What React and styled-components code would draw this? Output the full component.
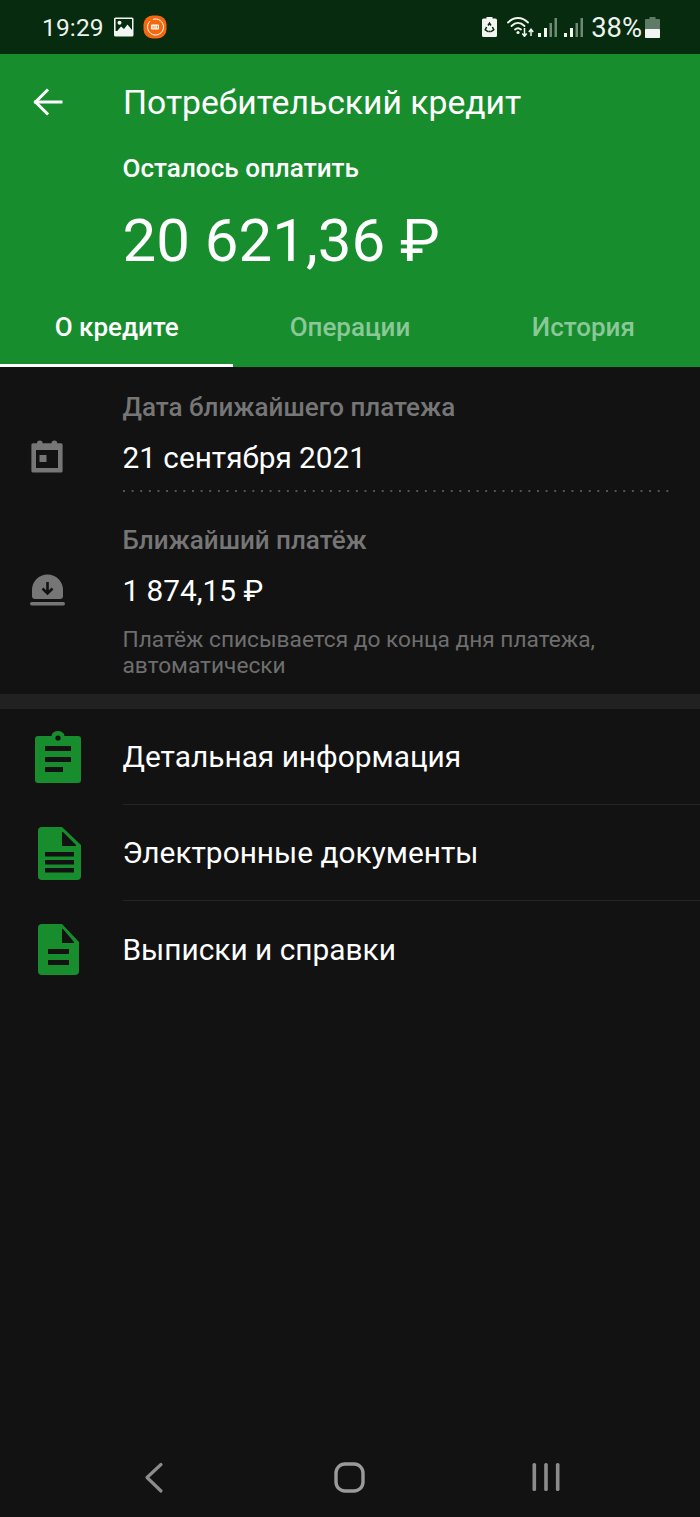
import React from "react";
import styled, { createGlobalStyle } from "styled-components";

const Global = createGlobalStyle`
  html, body { margin: 0; padding: 0; background: #121212; }
  body { font-family: Roboto, "Noto Sans", sans-serif; -webkit-font-smoothing: antialiased; }
  * { box-sizing: border-box; }
`;

const Page = styled.div`
  width: 700px;
  height: 1517px;
  background: #121212;
  color: #fff;
  display: flex;
  flex-direction: column;
  overflow: hidden;
`;

const StatusBar = styled.div`
  height: 54px;
  flex: none;
  background: #062b0e;
  display: flex;
  align-items: center;
  padding: 0 40px 0 42px;
  color: #eef2ee;
`;
const StatusTime = styled.span`
  font-size: 24.5px;
  margin-right: 9px;
  letter-spacing: 0.15px;
`;
const StatusRight = styled.div`
  margin-left: auto;
  display: flex;
  align-items: center;
`;
const StatusPercent = styled.span`
  font-size: 27.4px;
  margin: 2px 3px 0 8px;
`;

const Header = styled.header`
  background: #178d2e;
  height: 313px;
  flex: none;
  display: flex;
  flex-direction: column;
`;
const AppBar = styled.div`
  display: flex;
  align-items: center;
  height: 78px;
  padding: 20px 0 0 32px;
  gap: 59px;
`;
const BackWrap = styled.div`
  display: flex;
  padding-bottom: 3px;
`;
const Title = styled.h1`
  margin: 0;
  font-size: 33.7px;
  font-weight: 400;
  line-height: 40px;
`;
const Summary = styled.div`
  padding: 0 0 0 122.5px;
  display: flex;
  flex-direction: column;
`;
const SummaryLabel = styled.div`
  margin-top: 21px;
  font-size: 26.1px;
  font-weight: 500;
  line-height: 30px;
`;
const Amount = styled.div`
  margin-top: 23px;
  font-size: 60px;
  font-weight: 400;
  line-height: 70px;
`;
const Tabs = styled.nav`
  margin-top: auto;
  display: grid;
  grid-template-columns: repeat(3, 1fr);
  height: 56px;
`;
const Tab = styled.div`
  display: flex;
  align-items: center;
  justify-content: center;
  padding-bottom: 21px;
  font-size: 26px;
  font-weight: 500;
  color: ${(p) => (p.$active ? "#fff" : "#8bc897")};
  border-bottom: 3px solid ${(p) => (p.$active ? "#fff" : "transparent")};
`;

const InfoSection = styled.section`
  height: 327px;
  flex: none;
  display: flex;
  flex-direction: column;
`;
const InfoRow = styled.div`
  display: grid;
  grid-template-columns: 122.5px 1fr;
  height: ${(p) => p.$height}px;
`;
const InfoIconCell = styled.div`
  display: flex;
  justify-content: center;
  padding: ${(p) => p.$top}px 28px 0 0;
`;
const InfoBody = styled.div`
  display: flex;
  flex-direction: column;
  padding-top: ${(p) => p.$top}px;
  padding-right: 30px;
`;
const InfoLabel = styled.div`
  font-size: 26px;
  font-weight: 500;
  line-height: 30px;
  color: #767676;
`;
const InfoValue = styled.div`
  margin-top: 21px;
  font-size: 29.75px;
  line-height: 30px;
  color: #fff;
`;
const Dots = styled.div`
  margin: 17px -2px 0 0;
  height: 2px;
  background-image: linear-gradient(to right, #555 0 2px, transparent 2px);
  background-size: 8.64px 2px;
  background-repeat: repeat-x;
`;
const InfoNote = styled.div`
  margin-top: 21px;
  font-size: 22.7px;
  line-height: 26px;
  color: #6e6e6e;
`;

const Band = styled.div`
  height: 15px;
  flex: none;
  background: #212121;
`;

const Menu = styled.div`
  display: flex;
  flex-direction: column;
`;
const MenuItem = styled.div`
  display: grid;
  grid-template-columns: 122.5px 1fr;
  height: 96px;
`;
const MenuIcon = styled.div`
  display: flex;
  align-items: center;
  justify-content: center;
  padding-right: ${(p) => p.$shift}px;
`;
const MenuText = styled.div`
  display: flex;
  align-items: center;
  font-size: 29.85px;
  padding-top: ${(p) => (p.$last ? 1 : 0)}px;
  border-bottom: ${(p) => (p.$last ? "none" : "1px solid #242424")};
`;

const NavBar = styled.div`
  margin-top: auto;
  height: 80px;
  flex: none;
  display: grid;
  grid-template-columns: repeat(3, 196px);
  align-items: start;
  padding: 0 56px;
`;
const NavCell = styled.div`
  display: flex;
  justify-content: center;
  padding-top: 25px;
`;

const ImageGlyph = () => (
  <svg width="22" height="22" viewBox="0 0 22 22" style={{ marginRight: 8 }}>
    <rect x="1" y="1.5" width="19.5" height="19" rx="1.5" fill="#f2f5f2" />
    <rect x="2.6" y="3" width="16.4" height="12" fill="#062b0e" />
    <circle cx="6.5" cy="6.8" r="2" fill="#f2f5f2" />
    <path d="M2.5 17 L8 10.5 L11 13 L14.5 8.5 L19 14 V18 H2.5Z" fill="#f2f5f2" />
  </svg>
);
const MiGlyph = () => (
  <svg width="24" height="24" viewBox="0 0 24 24">
    <rect x="0.5" y="0.5" width="23" height="23" rx="9" fill="#f4690f" />
    <path d="M7 6.2 A8 8 0 1 0 10 4.4" fill="none" stroke="#fff" strokeWidth="1" />
    <rect x="8" y="9.5" width="8" height="5" rx="1" fill="#fff" />
    <path d="M10 10.8V13.5M12 10.8V13.5M14.4 10.5V13.5" stroke="#f4690f" strokeWidth="0.8" />
  </svg>
);
const RecycleBattery = () => (
  <svg width="15" height="20" viewBox="0 0 15 20" style={{ marginRight: 10 }}>
    <path d="M4.5 0H10.5V1.5H13.5a1.5 1.5 0 0 1 1.5 1.5V18.5a1.5 1.5 0 0 1-1.5 1.5H1.5A1.5 1.5 0 0 1 0 18.5V3a1.5 1.5 0 0 1 1.5-1.5H4.5Z" fill="#f2f5f2" />
    <path d="M6 8.5 L7.5 6.2 L9 8.5 M10.4 10 L11.8 12.8 L9 14.6 M4.6 10 L3.2 12.8 L6 14.6 M6.4 14.6H8.6" stroke="#062b0e" strokeWidth="1.5" fill="none" />
  </svg>
);
const Wifi = () => (
  <svg width="27" height="20" viewBox="0 0 27 20" style={{ marginRight: 4 }}>
    <g fill="none" stroke="#f2f5f2" strokeWidth="1.8" strokeLinecap="round">
      <path d="M1 5.5 C7 -0.5 15 -0.5 21 5.5" />
      <path d="M4.5 9 C8.5 5 13.5 5 17.5 9" />
      <path d="M8 12.5 C10 10.8 12 10.8 14 12.5" />
    </g>
    <circle cx="11" cy="15.5" r="1.6" fill="#f2f5f2" />
    <path d="M17.5 11V19M15.3 16.5L17.5 19.3L19.7 16.5M24 19V12.5M21.8 15L24 12.2L26.2 15" stroke="#f2f5f2" strokeWidth="1.5" fill="none" />
  </svg>
);
const Signal = ({ style }) => (
  <svg width="19" height="19" viewBox="0 0 19 19" style={{ marginTop: 1, ...style }}>
    <rect x="0" y="15" width="3" height="4" fill="#f2f5f2" />
    <rect x="6" y="10" width="3" height="9" fill="#f2f5f2" />
    <rect x="11.5" y="5" width="2.5" height="14" fill="#6e8a74" />
    <rect x="16.5" y="0" width="2.5" height="19" fill="#6e8a74" />
  </svg>
);
const Battery = () => (
  <svg width="15" height="21" viewBox="0 0 15 21">
    <path d="M4.5 0H10.5V2H14a1 1 0 0 1 1 1V21H0V3a1 1 0 0 1 1-1H4.5Z" fill="#5f7a66" />
    <rect x="0" y="12" width="15" height="9" rx="1" fill="#f2f5f2" />
  </svg>
);

const BackArrow = () => (
  <svg width="32" height="32" viewBox="0 0 32 32" fill="none" stroke="#fff" strokeWidth="3" strokeLinecap="square">
    <path d="M3.5 16 H29" />
    <path d="M15 4.5 L3.5 16 L15 27.5" />
  </svg>
);
const CalendarIcon = () => (
  <svg width="32" height="33" viewBox="0 0 32 33">
    <path fill="#767676" d="M6 3.2a2.8 2.8 0 0 1 5.6 0h9a2.8 2.8 0 0 1 5.6 0H30a1.6 1.6 0 0 1 1.6 1.6V31a1.6 1.6 0 0 1-1.6 1.6H2A1.6 1.6 0 0 1 .4 31V4.8A1.6 1.6 0 0 1 2 3.2Z" />
    <rect x="5" y="10" width="22" height="18" fill="#121212" />
    <rect x="8.5" y="15" width="7" height="7" fill="#767676" />
  </svg>
);
const DownloadIcon = () => (
  <svg width="35" height="33" viewBox="0 0 35 33">
    <path fill="#767676" d="M2 23 V17 a15.5 15.5 0 0 1 31 0 V23 Q33 26 30 26 H5 Q2 26 2 23Z" />
    <path d="M17.5 9V20M12.5 15.5L17.5 20.5L22.5 15.5" stroke="#121212" strokeWidth="2.6" fill="none" />
    <rect x="0" y="29" width="35" height="3.4" rx="1.7" fill="#767676" />
  </svg>
);
const ClipboardIcon = () => (
  <svg width="46" height="52" viewBox="0 0 46 52">
    <path fill="#178d2e" d="M16.5 5 a6.5 5 0 0 1 13 0 H43 a3 3 0 0 1 3 3 V49 a3 3 0 0 1-3 3 H3 a3 3 0 0 1-3-3 V8 a3 3 0 0 1 3-3Z" />
    <circle cx="23" cy="7" r="2.6" fill="#121212" />
    <rect x="10" y="15" width="26" height="5" fill="#121212" />
    <rect x="10" y="26" width="26" height="5" fill="#121212" />
    <rect x="10" y="36" width="18" height="5" fill="#121212" />
  </svg>
);
const DocIcon = ({ lines, w, h }) => (
  <svg width={w} height={h} viewBox={`0 0 ${w} ${h}`}>
    <path fill="#178d2e" d={`M4 0 H24 L${w} 18 V${h - 4} a4 4 0 0 1-4 4 H4 a4 4 0 0 1-4-4 V4 a4 4 0 0 1 4-4Z`} />
    <path fill="#121212" d={`M24 5 V19 H${w - 5} V18 L25 5Z`} />
    {lines.map((y) => (
      <rect key={y} x={lines.length === 3 ? 7 : 10} y={y} width={lines.length === 3 ? 29 : 21} height={lines.length === 3 ? 4.5 : 5} fill="#121212" />
    ))}
  </svg>
);
const NavBack = () => (
  <svg width="20" height="32" viewBox="0 0 20 32" fill="none" stroke="#8c8c8c" strokeWidth="3.2" strokeLinecap="round" strokeLinejoin="round">
    <path d="M17 2.5 L3 15.5 L17 29" />
  </svg>
);
const NavHome = () => (
  <svg width="32" height="32" viewBox="0 0 32 32" fill="none" stroke="#9a9a9a" strokeWidth="3.4">
    <rect x="2" y="2" width="27" height="27" rx="9" />
  </svg>
);
const NavRecents = () => (
  <svg width="30" height="30" viewBox="0 0 30 30" fill="#8c8c8c">
    <rect x="1.5" y="1" width="3.6" height="28" rx="1.6" />
    <rect x="13.2" y="1" width="3.6" height="28" rx="1.6" />
    <rect x="24.9" y="1" width="3.6" height="28" rx="1.6" />
  </svg>
);

export default function App() {
  return (
    <Page>
      <Global />
      <StatusBar>
        <StatusTime>19:29</StatusTime>
        <ImageGlyph />
        <MiGlyph />
        <StatusRight>
          <RecycleBattery />
          <Wifi />
          <Signal style={{ marginRight: 7 }} />
          <Signal />
          <StatusPercent>38%</StatusPercent>
          <Battery />
        </StatusRight>
      </StatusBar>
      <Header>
        <AppBar>
          <BackWrap><BackArrow /></BackWrap>
          <Title>Потребительский кредит</Title>
        </AppBar>
        <Summary>
          <SummaryLabel>Осталось оплатить</SummaryLabel>
          <Amount>20 621,36 ₽</Amount>
        </Summary>
        <Tabs>
          <Tab $active>О кредите</Tab>
          <Tab>Операции</Tab>
          <Tab>История</Tab>
        </Tabs>
      </Header>
      <InfoSection>
        <InfoRow $height={133}>
          <InfoIconCell $top={73}>
            <CalendarIcon />
          </InfoIconCell>
          <InfoBody $top={25}>
            <InfoLabel>Дата ближайшего платежа</InfoLabel>
            <InfoValue>21 сентября 2021</InfoValue>
            <Dots />
          </InfoBody>
        </InfoRow>
        <InfoRow $height={194}>
          <InfoIconCell $top={73}>
            <DownloadIcon />
          </InfoIconCell>
          <InfoBody $top={25}>
            <InfoLabel>Ближайший платёж</InfoLabel>
            <InfoValue>1 874,15 ₽</InfoValue>
            <InfoNote>
              Платёж списывается до конца дня платежа,
              <br />
              автоматически
            </InfoNote>
          </InfoBody>
        </InfoRow>
      </InfoSection>
      <Band />
      <Menu>
        <MenuItem>
          <MenuIcon $shift={6}><ClipboardIcon /></MenuIcon>
          <MenuText>Детальная информация</MenuText>
        </MenuItem>
        <MenuItem>
          <MenuIcon $shift={4}><DocIcon w={43} h={53} lines={[25, 33, 41]} /></MenuIcon>
          <MenuText>Электронные документы</MenuText>
        </MenuItem>
        <MenuItem>
          <MenuIcon $shift={5}><DocIcon w={41} h={51} lines={[25, 36]} /></MenuIcon>
          <MenuText $last>Выписки и справки</MenuText>
        </MenuItem>
      </Menu>
      <NavBar>
        <NavCell><NavBack /></NavCell>
        <NavCell><NavHome /></NavCell>
        <NavCell><NavRecents /></NavCell>
      </NavBar>
    </Page>
  );
}
